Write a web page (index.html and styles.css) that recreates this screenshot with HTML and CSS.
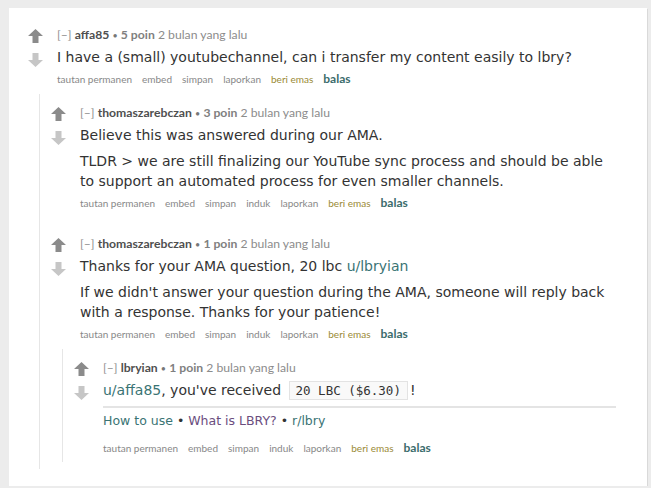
FILE: index.html
```html
<!DOCTYPE html>
<html>
<head>
<meta charset="utf-8">
<link rel="stylesheet" href="styles.css">
</head>
<body>
<div class="card">
  <div class="comment">
    <div class="row">
      <div class="midcol">
        <svg class="arrow up" viewBox="0 0 15 14"><polygon points="7.5,0 15,7 10.5,7 10.5,14 4.5,14 4.5,7 0,7"/></svg>
        <svg class="arrow down" viewBox="0 0 15 14"><polygon points="7.5,14 15,7 10.5,7 10.5,0 4.5,0 4.5,7 0,7"/></svg>
      </div>
      <div class="entry">
        <p class="tagline"><span class="expand">[–]</span> <span class="author">affa85</span> <span class="sep">•</span> <span class="score">5 poin</span> <span class="time">2 bulan yang lalu</span></p>
        <div class="md"><p>I have a (small) youtubechannel, can i transfer my content easily to lbry?</p></div>
        <ul class="buttons"><li>tautan permanen</li><li>embed</li><li>simpan</li><li>laporkan</li><li class="gild">beri emas</li><li class="reply">balas</li></ul>
      </div>
    </div>
    <div class="child">
      <div class="comment">
        <div class="row">
          <div class="midcol">
            <svg class="arrow up" viewBox="0 0 15 14"><polygon points="7.5,0 15,7 10.5,7 10.5,14 4.5,14 4.5,7 0,7"/></svg>
            <svg class="arrow down" viewBox="0 0 15 14"><polygon points="7.5,14 15,7 10.5,7 10.5,0 4.5,0 4.5,7 0,7"/></svg>
          </div>
          <div class="entry">
            <p class="tagline"><span class="expand">[–]</span> <span class="author">thomaszarebczan</span> <span class="sep">•</span> <span class="score">3 poin</span> <span class="time">2 bulan yang lalu</span></p>
            <div class="md">
              <p>Believe this was answered during our AMA.</p>
              <p>TLDR &gt; we are still finalizing our YouTube sync process and should be able to support an automated process for even smaller channels.</p>
            </div>
            <ul class="buttons"><li>tautan permanen</li><li>embed</li><li>simpan</li><li>induk</li><li>laporkan</li><li class="gild">beri emas</li><li class="reply">balas</li></ul>
          </div>
        </div>
      </div>
      <div class="comment">
        <div class="row">
          <div class="midcol">
            <svg class="arrow up" viewBox="0 0 15 14"><polygon points="7.5,0 15,7 10.5,7 10.5,14 4.5,14 4.5,7 0,7"/></svg>
            <svg class="arrow down" viewBox="0 0 15 14"><polygon points="7.5,14 15,7 10.5,7 10.5,0 4.5,0 4.5,7 0,7"/></svg>
          </div>
          <div class="entry">
            <p class="tagline"><span class="expand">[–]</span> <span class="author">thomaszarebczan</span> <span class="sep">•</span> <span class="score">1 poin</span> <span class="time">2 bulan yang lalu</span></p>
            <div class="md">
              <p>Thanks for your AMA question, 20 lbc <a class="link">u/lbryian</a></p>
              <p>If we didn't answer your question during the AMA, someone will reply back with a response. Thanks for your patience!</p>
            </div>
            <ul class="buttons"><li>tautan permanen</li><li>embed</li><li>simpan</li><li>induk</li><li>laporkan</li><li class="gild">beri emas</li><li class="reply">balas</li></ul>
          </div>
        </div>
        <div class="child">
          <div class="comment">
            <div class="row">
              <div class="midcol">
                <svg class="arrow up" viewBox="0 0 15 14"><polygon points="7.5,0 15,7 10.5,7 10.5,14 4.5,14 4.5,7 0,7"/></svg>
                <svg class="arrow down" viewBox="0 0 15 14"><polygon points="7.5,14 15,7 10.5,7 10.5,0 4.5,0 4.5,7 0,7"/></svg>
              </div>
              <div class="entry">
                <p class="tagline"><span class="expand">[–]</span> <span class="author">lbryian</span> <span class="sep">•</span> <span class="score">1 poin</span> <span class="time">2 bulan yang lalu</span></p>
                <div class="md">
                  <p><a class="link">u/affa85</a>, you've received <code>20 LBC ($6.30)</code>!</p>
                  <hr>
                  <p class="footer"><a class="link">How to use</a> • <a class="visited">What is LBRY?</a> • <a class="link">r/lbry</a></p>
                </div>
                <ul class="buttons last"><li>tautan permanen</li><li>embed</li><li>simpan</li><li>induk</li><li>laporkan</li><li class="gild">beri emas</li><li class="reply">balas</li></ul>
              </div>
            </div>
          </div>
        </div>
      </div>
    </div>
  </div>
</div>
</body>
</html>
```

FILE: styles.css
```css
* { box-sizing: border-box; }
html, body { margin: 0; padding: 0; }
body {
  background: #ececec;
  padding: 8px 0 0 9px;
  font-family: "DejaVu Sans", Verdana, sans-serif;
}
.card {
  width: 638px;
  background: #fff;
  box-shadow: 1px 1px 0 #d9d9d9;
  padding: 8px 31px 17px 19px;
}
.comment { padding-top: 12px; }
.comment + .comment { margin-top: 15px; }
.row { display: flex; }
.midcol {
  flex: none;
  width: 15px;
  margin-right: 14px;
  padding-top: 1px;
  display: flex;
  flex-direction: column;
  gap: 10px;
}
.arrow { display: block; width: 15px; height: 14px; }
.up polygon { fill: #8b8b8b; }
.down polygon { fill: #c6c6c6; }
.entry { flex: 1; min-width: 0; }
.tagline {
  margin: 0;
  height: 13px;
  white-space: nowrap;
  font: 12.2px/13px Lato, "Open Sans", sans-serif;
  color: #909090;
}
.author { color: #4f4f4f; font-weight: 700; }
.score { color: #808080; font-weight: 700; }
.sep { font-size: 9px; color: #777; }
.time { color: #8c8c8c; }
.md { margin-top: 6px; color: #333; font-size: 14px; line-height: 20px; }
.md p { margin: 0; }
.md p + p { margin-top: 6px; }
.link { color: #3a7474; text-decoration: none; }
.visited { color: #6a4d7e; text-decoration: none; }
code {
  font-family: "DejaVu Sans Mono", "Liberation Mono", monospace;
  font-size: 12.5px;
  line-height: 14px;
  color: #333;
  background: #f9f9f9;
  border: 1px solid #e3e3e3;
  padding: 1px 6px;
  margin: 0 2px 0 3px;
}
hr {
  border: 0;
  height: 2px;
  background: #e4e4e4;
  margin: 6px 0 3px;
}
.md p.footer { margin-top: 0; font-size: 12.5px; }
.buttons {
  list-style: none;
  margin: 5px 0 0;
  padding: 0;
  height: 14px;
  display: flex;
  align-items: baseline;
  gap: 10px;
  font: 10px/14px Lato, "Open Sans", sans-serif;
  color: #888;
}
.buttons.last { margin-top: 10px; }
.buttons .gild { color: #9a8a35; }
.buttons .reply { color: #3b6c6c; font-size: 12px; font-weight: 700; }
.child {
  margin-top: 8px;
  margin-left: 11px;
  border-left: 1px solid #e6e6e6;
  padding-left: 11px;
  padding-bottom: 7px;
}
```
